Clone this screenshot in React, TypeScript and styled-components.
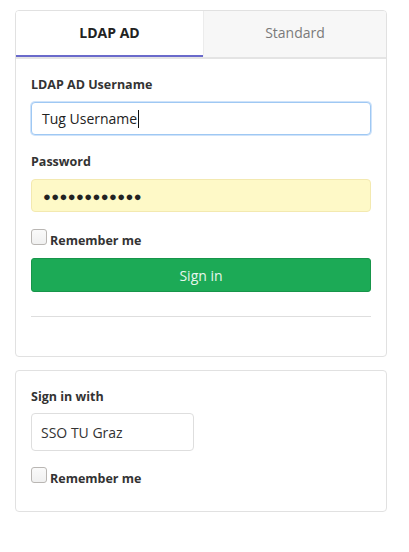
import React from "react";
import styled, { createGlobalStyle } from "styled-components";

const Global = createGlobalStyle`
  html, body { margin: 0; padding: 0; background: #ffffff; }
  body { font-family: "Open Sans", "Noto Sans", sans-serif; color: #333; }
  * { box-sizing: border-box; }
`;

const Page = styled.div`
  padding: 10px 22px 0 15px;
  display: flex;
  flex-direction: column;
  gap: 13px;
`;

const Card = styled.div`
  border: 1px solid #e1e1e1;
  border-radius: 4px;
  background: #fff;
  overflow: hidden;
`;

const Tabs = styled.div`
  display: grid;
  grid-template-columns: 187px 1fr;
  border-bottom: 2px solid #e4e4e4;
`;

const Tab = styled.div<{ $active?: boolean }>`
  height: 46px;
  display: flex;
  align-items: center;
  justify-content: center;
  padding-bottom: 2px;
  font-size: 14px;
  font-weight: ${(p) => (p.$active ? 700 : 400)};
  color: ${(p) => (p.$active ? "#222" : "#7a7a7a")};
  background: ${(p) => (p.$active ? "#fff" : "#f7f7f7")};
  border-bottom: 2px solid ${(p) => (p.$active ? "#6a6acb" : "transparent")};
  border-left: ${(p) => (p.$active ? "none" : "1px solid #ececec")};
`;

const Body = styled.div<{ $pad: string }>`
  padding: ${(p) => p.$pad};
  display: flex;
  flex-direction: column;
`;

const Label = styled.div<{ $mt?: number; $mb?: number }>`
  font-size: 12.5px;
  font-weight: 700;
  color: #333;
  line-height: 16px;
  margin-top: ${(p) => p.$mt ?? 0}px;
  margin-bottom: ${(p) => p.$mb ?? 10}px;
`;

const Input = styled.div<{ $variant?: "focus" | "fill" }>`
  height: 33px;
  border-radius: 4px;
  display: flex;
  align-items: center;
  padding: 0 10px;
  font-size: 14px;
  color: #222;
  border: 1px solid
    ${(p) => (p.$variant === "focus" ? "#9fc8f3" : p.$variant === "fill" ? "#f3e9b0" : "#dcdcdc")};
  box-shadow: ${(p) => (p.$variant === "focus" ? "0 0 0 1px #cfe3fa" : "none")};
  background: ${(p) => (p.$variant === "fill" ? "#fef9c7" : "#fff")};
`;

const Caret = styled.span`
  display: inline-block;
  width: 1px;
  height: 18px;
  background: #111;
  margin-left: 1px;
`;

const Dots = styled.span`
  font-size: 13px;
  letter-spacing: 0.4px;
  color: #222;
  padding-left: 1px;
`;

const CheckRow = styled.label<{ $mt: number }>`
  display: flex;
  align-items: flex-start;
  gap: 3px;
  margin-top: ${(p) => p.$mt}px;
  font-size: 12.5px;
  font-weight: 700;
  color: #333;
`;

const Box = styled.span`
  width: 16px;
  height: 16px;
  border: 1px solid #b9b6b3;
  border-radius: 3px;
  background: linear-gradient(#fafafa, #f0f0f0);
`;

const CheckText = styled.span`
  margin-top: 4px;
  line-height: 15px;
`;

const Button = styled.div`
  margin-top: 10px;
  height: 34px;
  border-radius: 3px;
  background: #1caa56;
  border: 1px solid #17954a;
  color: #e8f6ee;
  font-size: 14px;
  display: flex;
  align-items: center;
  justify-content: center;
`;

const Rule = styled.div`
  margin-top: 24px;
  height: 1px;
  background: #dedede;
`;

const SsoBox = styled.div`
  width: 163px;
  height: 38px;
  border: 1px solid #dedede;
  border-radius: 4px;
  display: flex;
  align-items: center;
  padding: 0 9px;
  font-size: 14px;
  color: #333;
`;

export default function App() {
  return (
    <>
      <Global />
      <Page>
        <Card>
          <Tabs>
            <Tab $active>LDAP AD</Tab>
            <Tab>Standard</Tab>
          </Tabs>
          <Body $pad="18px 15px 39px 15px">
            <Label $mb={9}>LDAP AD Username</Label>
            <Input $variant="focus">
              Tug Username<Caret />
            </Input>
            <Label $mt={19} $mb={9}>Password</Label>
            <Input $variant="fill">
              <Dots>●●●●●●●●●●●●</Dots>
            </Input>
            <CheckRow $mt={17}>
              <Box />
              <CheckText>Remember me</CheckText>
            </CheckRow>
            <Button>Sign in</Button>
            <Rule />
          </Body>
        </Card>
        <Card>
          <Body $pad="18px 15px 25px 15px">
            <Label $mb={8}>Sign in with</Label>
            <SsoBox>SSO TU Graz</SsoBox>
            <CheckRow $mt={16}>
              <Box />
              <CheckText>Remember me</CheckText>
            </CheckRow>
          </Body>
        </Card>
      </Page>
    </>
  );
}
